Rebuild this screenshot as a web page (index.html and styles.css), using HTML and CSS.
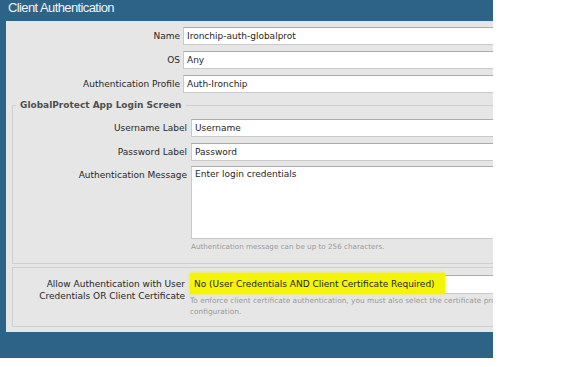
FILE: index.html
```html
<!DOCTYPE html>
<html lang="en">
<head>
  <meta charset="UTF-8">
  <title>Client Authentication</title>
  <link rel="stylesheet" href="styles.css">
</head>
<body>

  <!-- Dialog -->
  <div class="dialog">
    <div class="dialog__title">Client Authentication</div>

    <div class="dialog__body">
      <div class="row">
        <label class="row__label">Name</label>
        <div class="input">Ironchip-auth-globalprot</div>
      </div>
      <div class="row">
        <label class="row__label">OS</label>
        <div class="input">Any</div>
      </div>
      <div class="row">
        <label class="row__label">Authentication Profile</label>
        <div class="input">Auth-Ironchip</div>
      </div>

      <!-- Login screen -->
      <fieldset class="group">
        <legend class="group__legend">GlobalProtect App Login Screen</legend>
        <div class="row">
          <label class="row__label">Username Label</label>
          <div class="input">Username</div>
        </div>
        <div class="row row--close">
          <label class="row__label">Password Label</label>
          <div class="input">Password</div>
        </div>
        <div class="row row--last">
          <label class="row__label">Authentication Message</label>
          <div class="field">
            <div class="input input--area">Enter login credentials</div>
            <div class="hint">Authentication message can be up to 256 characters.</div>
          </div>
        </div>
      </fieldset>

      <!-- Certificate option -->
      <div class="group group--box">
        <div class="row row--last">
          <label class="row__label">Allow Authentication with User<br>Credentials OR Client Certificate</label>
          <div class="field">
            <div class="input input--select">
              <span class="highlight">No (User Credentials AND Client Certificate Required)</span>
            </div>
            <div class="hint hint--wide">To enforce client certificate authentication, you must also select the certificate profile in the portal/gateway<br>configuration.</div>
          </div>
        </div>
      </div>
    </div>
  </div>

</body>
</html>
```

FILE: styles.css
```css
body {
  margin: 0;
  background: #fff;
  font-family: "DejaVu Sans", sans-serif;
  font-size: 9px;
  color: #262626;
}

.dialog {
  width: 493px;
  height: 358px;
  background: #2c6386;
  overflow: hidden;
}

.dialog__title {
  height: 21px;
  padding-left: 8px;
  font-family: "Liberation Sans", sans-serif;
  font-size: 13px;
  letter-spacing: -0.6px;
  line-height: 15px;
  color: #eef4f8;
}

.dialog__body {
  margin-left: 6px;
  padding: 6px 0 5px 0;
  background: #e6e6e6;
}

/* Form rows */
.row {
  display: flex;
  margin-bottom: 6px;
}

.row--close {
  margin-bottom: 5px;
}

.row--last {
  margin-bottom: 0;
}

.row__label {
  flex: none;
  width: 174px;
  padding: 3px 3px 0 0;
  line-height: 12px;
  text-align: right;
}

.field {
  flex: none;
}

.input {
  flex: none;
  box-sizing: border-box;
  width: 360px;
  height: 18px;
  padding: 0 4px 0 3px;
  background: #fff;
  border: 1px solid #c9c9c9;
  border-top-color: #ababab;
  line-height: 16px;
  white-space: nowrap;
}

.input--area {
  height: 73px;
  padding-top: 1px;
  line-height: 12px;
}

.input--select {
  height: 19px;
  line-height: 17px;
}

.highlight {
  display: block;
  width: fit-content;
  margin: -3px 0 0 -4px;
  padding: 3px 10px 1px 4px;
  background: #f3f406;
  box-shadow: 0 0 2px 1px rgba(243, 244, 6, 0.6);
  border-radius: 2px;
}

.hint {
  margin-top: 2px;
  font-size: 7.2px;
  line-height: 12px;
  color: #9a9a9a;
  white-space: nowrap;
}

.hint--wide {
  margin-top: 1px;
  font-size: 7.4px;
  line-height: 11px;
}

/* Groups */
.group {
  margin: 5px -20px 0 6px;
  padding: 8px 0 10px 0;
  border: 1px solid #cfcfcf;
  min-width: 0;
}

.group__legend {
  margin-left: 3px;
  padding: 0 4px;
  line-height: 12px;
  font-weight: bold;
  color: #4f4f4f;
}

.group .row__label {
  padding-right: 4px;
}

.group--box {
  margin-top: 3px;
  padding: 7px 0 9px 0;
}

.group--box .row__label {
  width: 172px;
  padding-right: 5px;
}
```
